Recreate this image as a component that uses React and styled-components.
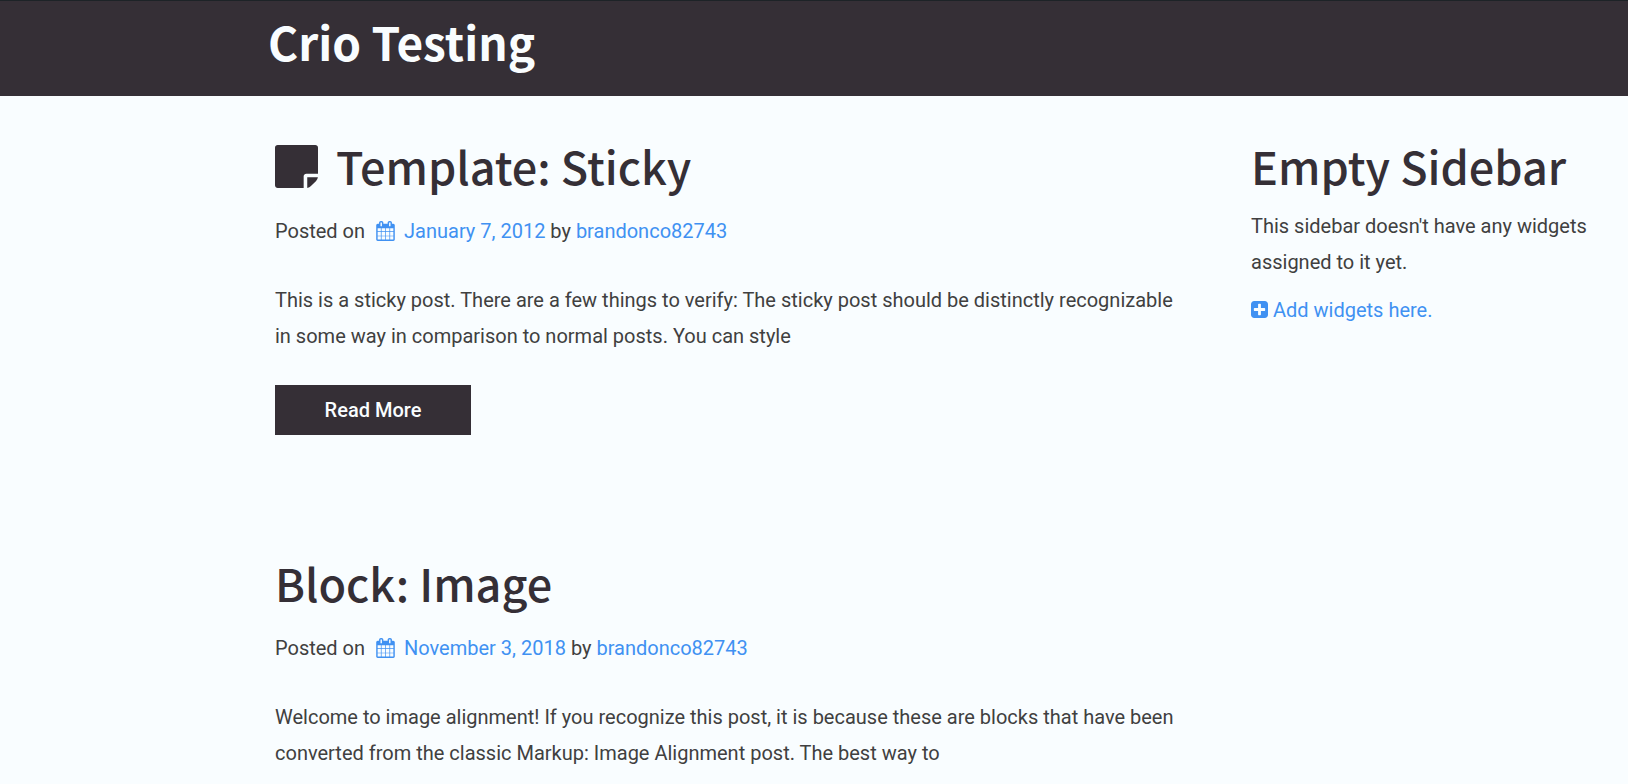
import React from "react";
import styled, { createGlobalStyle } from "styled-components";

const posts = [
  {
    title: "Template: Sticky",
    sticky: true,
    date: "January 7, 2012",
    author: "brandonco82743",
    excerpt:
      "This is a sticky post. There are a few things to verify: The sticky post should be distinctly recognizable in some way in comparison to normal posts. You can style",
  },
  {
    title: "Block: Image",
    sticky: false,
    date: "November 3, 2018",
    author: "brandonco82743",
    excerpt:
      "Welcome to image alignment! If you recognize this post, it is because these are blocks that have been converted from the classic Markup: Image Alignment post. The best way to",
  },
];

const StickyNote = () => (
  <StickyIcon viewBox="0 0 1536 1536" aria-hidden="true">
    <path d="M1024 1120v416H96q-40 0-68-28t-28-68V96q0-40 28-68T96 0h1344q40 0 68 28t28 68v928h-416q-40 0-68 28t-28 68zm128 32h381q-15 82-65 132l-184 184q-50 50-132 65z" />
  </StickyIcon>
);

const Calendar = () => (
  <CalendarIcon viewBox="0 0 1664 1792" aria-hidden="true">
    <path d="M128 1664h288v-288h-288v288zm352 0h320v-288h-320v288zm-352-352h288v-320h-288v320zm352 0h320v-320h-320v320zm-352-384h288v-288h-288v288zm736 736h320v-288h-320v288zm-384-736h320v-288h-320v288zm768 736h288v-288h-288v288zm-384-352h320v-320h-320v320zm-352-864v-288q0-13-9.500-22.500t-22.500-9.500h-64q-13 0-22.500 9.500t-9.500 22.500v288q0 13 9.500 22.500t22.500 9.500h64q13 0 22.500-9.500t9.500-22.500zm736 864h288v-320h-288v320zm-384-384h320v-288h-320v288zm384 0h288v-288h-288v288zm32-480v-288q0-13-9.500-22.500t-22.500-9.500h-64q-13 0-22.500 9.500t-9.500 22.500v288q0 13 9.500 22.500t22.500 9.500h64q13 0 22.500-9.500t9.500-22.500zm384-64v1280q0 52-38 90t-90 38h-1408q-52 0-90-38t-38-90v-1280q0-52 38-90t90-38h128v-96q0-66 47-113t113-47h64q66 0 113 47t47 113v96h384v-96q0-66 47-113t113-47h64q66 0 113 47t47 113v96h128q52 0 90 38t38 90z" />
  </CalendarIcon>
);

const PlusSquare = () => (
  <PlusIcon viewBox="0 0 1536 1536" aria-hidden="true">
    <path d="M1280 832v-128q0-26-19-45t-45-19h-320v-320q0-26-19-45t-45-19h-128q-26 0-45 19t-19 45v320h-320q-26 0-45 19t-19 45v128q0 26 19 45t45 19h320v320q0 26 19 45t45 19h128q26 0 45-19t19-45v-320h320q26 0 45-19t19-45zm256-544v960q0 119-84.500 203.500t-203.500 84.500h-960q-119 0-203.500-84.500t-84.500-203.500v-960q0-119 84.500-203.500t203.500-84.500h960q119 0 203.500 84.500t84.500 203.500z" />
  </PlusIcon>
);

const App = () => {
  return (
    <>
      <GlobalStyle />
      <Header>
        <SiteTitle>
          <a href="#home">Crio Testing</a>
        </SiteTitle>
      </Header>
      <Content>
        <main>
          {posts.map(({ title, sticky, date, author, excerpt }) => (
            <Post key={title}>
              <Heading>
                {sticky && <StickyNote />}
                {title}
              </Heading>
              <Meta>
                Posted on{" "}
                <TextLink href="#date">
                  <Calendar />
                  {date}
                </TextLink>{" "}
                by <TextLink href="#author">{author}</TextLink>
              </Meta>
              <Text>{excerpt}</Text>
              <ReadMore type="button">Read More</ReadMore>
            </Post>
          ))}
        </main>
        <aside>
          <Heading>Empty Sidebar</Heading>
          <SidebarText>
            This sidebar doesn't have any widgets assigned to it yet.
          </SidebarText>
          <Text>
            <TextLink href="#widgets">
              <PlusSquare />
              Add widgets here.
            </TextLink>
          </Text>
        </aside>
      </Content>
    </>
  );
};

export default App;

const GlobalStyle = createGlobalStyle`
  * {
    box-sizing: border-box;
  }

  body {
    margin: 0;
    background: #f9fdff;
    color: #404040;
    font-family: Roboto, sans-serif;
    font-size: 20px;
    font-weight: 400;
    line-height: 36px;
  }
`;

const Header = styled.header`
  padding: 6px 15px 20px 268px;
  border-top: 1px solid #1d2327;
  background: #352f36;
`;

const SiteTitle = styled.h1`
  margin: 0;
  font-family: "Noto Sans CJK JP", sans-serif;
  font-size: 46px;
  font-weight: 700;
  line-height: 69px;

  a {
    color: #f9fdff;
    text-decoration: none;
  }
`;

const Content = styled.div`
  display: grid;
  grid-template-columns: minmax(0, 1fr) 362px;
  gap: 76px;
  padding: 43px 15px 0 275px;
`;

const Post = styled.article`
  margin-bottom: 121px;
`;

const Heading = styled.h2`
  margin: 0;
  color: #352f36;
  font-family: "Noto Sans CJK JP", sans-serif;
  font-size: 45px;
  font-weight: 500;
  line-height: 54px;
`;

const Meta = styled.p`
  margin: 20px 0 33px;
`;

const Text = styled.p`
  margin: 0;
`;

const SidebarText = styled.p`
  margin: 15px 0 12px;
`;

const TextLink = styled.a`
  color: #4091f2;
  text-decoration: none;
`;

const ReadMore = styled.button`
  display: block;
  width: 196px;
  height: 50px;
  margin-top: 31px;
  padding: 0;
  border: 0;
  background: #352f36;
  color: #f9fdff;
  font-family: Roboto, sans-serif;
  font-size: 20px;
  font-weight: 500;
  cursor: pointer;
`;

const StickyIcon = styled.svg`
  width: 43px;
  height: 43px;
  margin-right: 18px;
  vertical-align: -3px;
  fill: currentColor;
`;

const CalendarIcon = styled.svg`
  width: 19px;
  height: 20px;
  margin: 0 9px 0 6px;
  vertical-align: -3px;
  fill: currentColor;
`;

const PlusIcon = styled.svg`
  width: 17px;
  height: 17px;
  margin-right: 5px;
  vertical-align: -1px;
  fill: currentColor;
`;
